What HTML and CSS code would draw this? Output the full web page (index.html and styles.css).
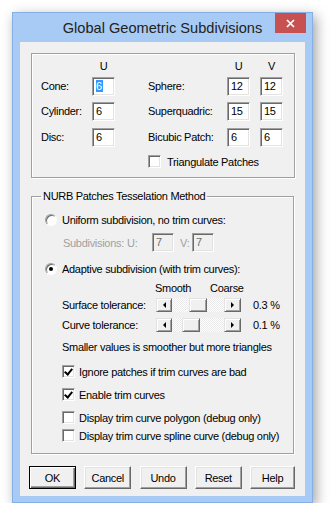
FILE: index.html
```html
<!DOCTYPE html>
<html lang="en">
<head>
  <meta charset="UTF-8">
  <title>Global Geometric Subdivisions</title>
  <link rel="stylesheet" href="styles.css">
</head>
<body>
  <div class="window">
    <div class="titlebar">
      <span></span>
      <div class="title">Global Geometric Subdivisions</div>
      <div class="close">
        <svg width="9" height="9" viewBox="0 0 9 9"><path d="M1 1L8 8M8 1L1 8" stroke="#fff" stroke-width="1.7"/></svg>
      </div>
    </div>

    <div class="client">
      <div class="group shapes">
        <div class="hdr c2">U</div>
        <div class="hdr c5">U</div>
        <div class="hdr c7">V</div>

        <div class="lbl c1 y2">Cone:</div>
        <div class="edit c2 y2"><span class="sel">6</span></div>
        <div class="lbl c4 y2">Sphere:</div>
        <div class="edit c5 y2">12</div>
        <div class="edit c7 y2">12</div>

        <div class="lbl c1 y3">Cylinder:</div>
        <div class="edit c2 y3">6</div>
        <div class="lbl c4 y3">Superquadric:</div>
        <div class="edit c5 y3">15</div>
        <div class="edit c7 y3">15</div>

        <div class="lbl c1 y4">Disc:</div>
        <div class="edit c2 y4">6</div>
        <div class="lbl c4 y4">Bicubic Patch:</div>
        <div class="edit c5 y4">6</div>
        <div class="edit c7 y4">6</div>

        <label class="check tri"><span class="box"></span>Triangulate Patches</label>
      </div>

      <fieldset class="group nurb">
        <legend>NURB Patches Tesselation Method</legend>

        <div class="row r-uniform"><span class="radio"></span>Uniform subdivision, no trim curves:</div>
        <div class="row r-sub">
          <span class="sub-label">Subdivisions:</span>
          <span class="sub-u">U:</span>
          <span class="edit off">7</span>
          <span class="sub-v">V:</span>
          <span class="edit off">7</span>
        </div>
        <div class="row r-adaptive"><span class="radio on"></span>Adaptive subdivision (with trim curves):</div>
        <div class="row r-ends"><span class="smooth">Smooth</span><span>Coarse</span></div>

        <div class="row r-tol">
          <span class="tol-label">Surface tolerance:</span>
          <div class="scroll">
            <span class="arrow left"></span>
            <span class="track"><span class="thumb" style="margin-left:17px"></span></span>
            <span class="arrow right"></span>
          </div>
          <span class="value">0.3 %</span>
        </div>
        <div class="row r-tol r-curve">
          <span class="tol-label">Curve tolerance:</span>
          <div class="scroll">
            <span class="arrow left"></span>
            <span class="track"><span class="thumb" style="margin-left:10px"></span></span>
            <span class="arrow right"></span>
          </div>
          <span class="value">0.1 %</span>
        </div>
        <div class="row r-note">Smaller values is smoother but more triangles</div>

        <label class="row check r-ignore"><span class="box on"></span>Ignore patches if trim curves are bad</label>
        <label class="row check r-enable"><span class="box on"></span>Enable trim curves</label>
        <label class="row check r-poly"><span class="box"></span>Display trim curve polygon (debug only)</label>
        <label class="row check r-spline"><span class="box"></span>Display trim curve spline curve (debug only)</label>
      </fieldset>

      <div class="buttons">
        <button class="btn default">OK</button>
        <button class="btn">Cancel</button>
        <button class="btn">Undo</button>
        <button class="btn">Reset</button>
        <button class="btn help">Help</button>
      </div>
    </div>
  </div>
</body>
</html>
```

FILE: styles.css
```css
body {
  margin: 0;
  padding: 12px 0 0 12px;
  background: #fff;
  font-family: "Liberation Sans", Arial, sans-serif;
  font-size: 11px;
  letter-spacing: -0.3px;
  color: #000;
}

.window {
  box-sizing: border-box;
  width: 301px;
  height: 491px;
  background: #a7cbf4;
  border: 1px solid #86b0e4;
  box-shadow: 3px 4px 12px rgba(0,0,0,0.38);
}

.titlebar {
  display: grid;
  grid-template-columns: 1fr auto 1fr;
  height: 29px;
}

.title {
  align-self: center;
  font-size: 14.6px;
  letter-spacing: 0;
  color: #222;
  margin-top: 1px;
}

.close {
  justify-self: end;
  width: 31px;
  height: 20px;
  margin-right: 6px;
  background: #c75050;
  display: flex;
  align-items: center;
  justify-content: center;
}

.client {
  height: 454px;
  margin: 0 7px;
  background: #f0f0f0;
  padding: 11px 0 0 11px;
  box-sizing: border-box;
}

.group {
  box-sizing: border-box;
  border: 1px solid #a0a0a0;
  box-shadow: 1px 1px 0 #fff, inset 1px 1px 0 #fff;
}

/* top box */
.shapes {
  width: 264px;
  height: 125px;
  padding: 0 0 0 9px;
  display: grid;
  grid-template-columns: 51px 23px 33px 79px 23px 10px 23px;
  grid-template-rows: 23px 25px 26px 27px 13px;
}

.hdr {
  grid-row: 1;
  align-self: center;
  text-align: center;
  margin-top: 1px;
}

.c1 { grid-column: 1; }
.c2 { grid-column: 2; }
.c4 { grid-column: 4; }
.c5 { grid-column: 5; }
.c7 { grid-column: 7; }
.y2 { grid-row: 2; }
.y3 { grid-row: 3; }
.y4 { grid-row: 4; }

.lbl {
  line-height: 19px;
  align-self: start;
  white-space: nowrap;
}

.edit {
  box-sizing: border-box;
  height: 19px;
  width: 23px;
  align-self: start;
  background: #fff;
  border: 1px solid;
  border-color: #a0a0a0 #fff #fff #a0a0a0;
  box-shadow: inset 1px 1px 0 #696969, inset -1px -1px 0 #e3e3e3;
  padding: 0 0 0 3px;
  line-height: 17px;
}

.sel {
  background: #3399ff;
  color: #fff;
  padding: 0 1px 0 0;
}

.check {
  display: flex;
  align-items: center;
  white-space: nowrap;
}

.box {
  box-sizing: border-box;
  flex: none;
  width: 13px;
  height: 13px;
  margin-right: 4px;
  background: #fff;
  border: 1px solid;
  border-color: #a0a0a0 #fff #fff #a0a0a0;
  box-shadow: inset 1px 1px 0 #696969, inset -1px -1px 0 #e3e3e3;
  position: relative;
}

.box.on::after {
  content: "";
  position: absolute;
  left: 3px;
  top: 1px;
  width: 3px;
  height: 6px;
  border: solid #000;
  border-width: 0 2px 2px 0;
  transform: rotate(40deg);
}

.tri {
  grid-row: 5;
  grid-column: 4 / -1;
}

.tri .box { margin-right: 6px; }

/* NURB box */
.nurb {
  width: 263px;
  margin: 12px 0 0 0;
  padding: 0 0 11px 13px;
  min-width: 0;
}

.nurb legend {
  margin-left: -4px;
  padding: 0 2px;
  line-height: 13px;
}

.row {
  display: flex;
  align-items: center;
  height: 14px;
  white-space: nowrap;
}

.radio {
  box-sizing: border-box;
  flex: none;
  width: 12px;
  height: 12px;
  margin-right: 5px;
  border-radius: 50%;
  background: #fff;
  border: 1px solid;
  border-color: #a0a0a0 #fff #fff #a0a0a0;
  box-shadow: inset 1px 1px 0 #696969;
  display: flex;
  align-items: center;
  justify-content: center;
}

.radio.on::after {
  content: "";
  width: 4px;
  height: 4px;
  border-radius: 50%;
  background: #000;
}

.r-uniform { margin-top: 10px; }

.r-sub {
  margin-top: 6px;
  height: 19px;
  padding-left: 18px;
  color: #a0a0a0;
}

.sub-label { width: 64px; }
.sub-u { width: 25px; }
.sub-v { width: 12px; margin-left: 6px; }

.edit.off {
  width: 22px;
  background: #f0f0f0;
  color: #6d6d6d;
}

.r-adaptive { margin-top: 10px; }

.r-ends {
  margin-top: 5px;
  height: 13px;
  padding-left: 110px;
}

.smooth { width: 55px; }

.r-tol {
  margin-top: 4px;
  padding-left: 17px;
}

.r-curve { margin-top: 6px; }

.tol-label { width: 94px; flex: none; }

.scroll {
  display: flex;
  flex: none;
  width: 85px;
  height: 14px;
}

.arrow, .thumb {
  box-sizing: border-box;
  background: #f0f0f0;
  border: 1px solid;
  border-color: #e3e3e3 #696969 #696969 #e3e3e3;
  box-shadow: inset 1px 1px 0 #fff, inset -1px -1px 0 #a0a0a0;
}

.arrow {
  width: 16px;
  display: flex;
  align-items: center;
  justify-content: center;
}

.arrow.right { width: 17px; }

.arrow::after {
  content: "";
  border-top: 3px solid transparent;
  border-bottom: 3px solid transparent;
}

.arrow.left::after { border-right: 3px solid #000; }
.arrow.right::after { border-left: 3px solid #000; }

.track {
  flex: 1;
  display: flex;
  background: repeating-conic-gradient(#fff 0 25%, #e9e9e9 0 50%) 0 0 / 2px 2px;
}

.thumb {
  width: 18px;
  height: 14px;
}

.value {
  width: 26px;
  margin-left: 12px;
  text-align: right;
}

.r-note {
  margin-top: 8px;
  height: 13px;
  padding-left: 17px;
}

.nurb .check { padding-left: 17px; height: 13px; }

.r-ignore { margin-top: 12px; }
.r-enable { margin-top: 10px; }
.r-poly { margin-top: 10px; }
.r-spline { margin-top: 5px; }

/* buttons */
.buttons {
  display: flex;
  justify-content: space-between;
  width: 266px;
  margin: 12px 0 0 -2px;
}

.btn {
  box-sizing: border-box;
  width: 47px;
  height: 23px;
  padding: 0;
  font: inherit;
  letter-spacing: -0.3px;
  color: #000;
  background: #f0f0f0;
  border: 1px solid;
  border-color: #fff #696969 #696969 #fff;
  box-shadow: inset -1px -1px 0 #a0a0a0, inset 1px 1px 0 #e3e3e3;
}

.btn.default {
  border-color: #000;
  box-shadow: inset 1px 1px 0 #fff, inset -1px -1px 0 #696969, inset -2px -2px 0 #a0a0a0;
}

.btn.help { width: 45px; }
```
